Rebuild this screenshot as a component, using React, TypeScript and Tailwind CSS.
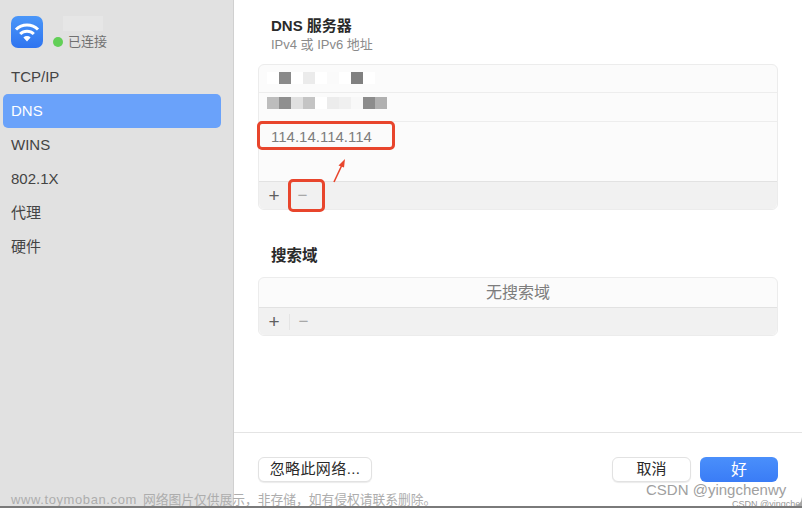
const font = { fontFamily: '"Liberation Sans", "Noto Sans CJK SC", sans-serif' };

const navItems = ["TCP/IP", "DNS", "WINS", "802.1X", "代理", "硬件"];

// mosaic cells covering the hidden DNS addresses
const rowOne = ["bg-white", "bg-[#8a8a8a]", "bg-white", "bg-[#ebebeb]", "bg-white", "bg-[#fafafa]", "bg-white", "bg-[#808080]", "bg-white"];
const rowTwo = ["bg-[#bdbdbd]", "bg-[#8f8f8f]", "bg-[#e0e0e0]", "bg-[#c4c4c4]", "bg-white", "bg-[#ececec]", "bg-[#f0f0f0]", "bg-[#f8f8f8]", "bg-[#8c8c8c]", "bg-[#b0b0b0]"];

const Mosaic = ({ cells }: { cells: string[] }) => (
  <div className="flex h-[12px]">
    {cells.map((c, i) => (
      <span key={i} className={`h-full w-[12px] ${c}`}></span>
    ))}
  </div>
);

const ListFooter = ({ divider }: { divider?: boolean }) => (
  <div className="flex h-[28px] items-center rounded-b-[6px] border-t border-[#e2e2e2] bg-[#f1f1f1] pl-[8px]">
    <span className="w-[14px] text-center text-[19px] font-light leading-none text-[#5f5f5f]">+</span>
    {divider && <span className="ml-[8px] h-[16px] w-px bg-[#e4e4e4]"></span>}
    <span className={`w-[13px] text-center text-[17px] leading-none text-[#a8a8a8] ${divider ? "ml-[7px]" : "ml-[15px]"}`}>−</span>
  </div>
);

const App = () => {
  return (
    <div className="relative flex h-[508px] w-[802px] overflow-hidden bg-white" style={font}>
      <aside className="flex w-[234px] shrink-0 flex-col border-r border-[#d0d0d0] bg-[#e1e1e1] px-[3px] pt-[16px]">
        <div className="flex items-start pl-[8px]">
          <div className="flex h-[32px] w-[32px] items-center justify-center rounded-[7px] bg-gradient-to-b from-[#4a96f8] to-[#2f74f0]">
            <svg width="32" height="32" viewBox="0 0 32 32" fill="none" stroke="white" strokeWidth="3">
              <path d="M5 13.5 A15.5 15.5 0 0 1 27 13.5" />
              <path d="M9.2 18 A9.6 9.6 0 0 1 22.8 18" />
              <path d="M16 25.5 L12.4 21.5 A5.2 5.2 0 0 1 19.6 21.5 Z" fill="white" stroke="none" />
            </svg>
          </div>
          <div className="ml-[10px] flex flex-col">
            <span className="ml-[10px] h-[15px] w-[40px] bg-[#e6e6e6]"></span>
            <div className="mt-[2px] flex items-center gap-[5px]">
              <span className="h-[10px] w-[10px] rounded-full bg-[#62cf57]"></span>
              <span className="text-[13px] leading-[18px] text-[#707070]">已连接</span>
            </div>
          </div>
        </div>
        <nav className="mt-[9px] flex w-[218px] flex-col">
          {navItems.map((item) => (
            <div
              key={item}
              className={`flex h-[34px] items-center rounded-[5px] pl-[8px] text-[15px] ${item === "DNS" ? "bg-[#6aa2fa] text-white" : "text-[#444444]"}`}
            >
              {item}
            </div>
          ))}
        </nav>
      </aside>

      <main className="flex min-w-0 flex-1 flex-col">
        <div className="h-[433px] border-b border-[#e4e4e4] px-[24px] pt-[17px]">
          <h2 className="pl-[13px] text-[15px] font-bold leading-[18px] text-[#2a2a2a]">DNS 服务器</h2>
          <p className="mt-[1px] pl-[13px] text-[13px] leading-[17px] text-[#8a8a8a]">IPv4 或 IPv6 地址</p>

          <div className="relative mt-[11px] w-[520px] rounded-[6px] border border-[#ececec] bg-[#fbfbfb]">
            <div className="flex h-[28px] items-start border-b border-[#ededed] pl-[8px] pt-[7px]">
              <Mosaic cells={rowOne} />
            </div>
            <div className="flex h-[29px] items-start border-b border-[#ededed] pl-[8px] pt-[4px]">
              <Mosaic cells={rowTwo} />
            </div>
            <div className="flex h-[31px] items-center pl-[12px] text-[15px] text-[#7d7d7d]">114.14.114.114</div>
            <div className="h-[28px]"></div>
            <ListFooter />

            {/* red annotations */}
            <div className="absolute left-[-2px] top-[56px] h-[29px] w-[138px] rounded-[5px] border-[3px] border-[#e8452c]"></div>
            <div className="absolute left-[29px] top-[114px] h-[33px] w-[37px] rounded-[5px] border-[3px] border-[#e8452c]"></div>
            <svg className="absolute left-[72px] top-[92px]" width="20" height="26" viewBox="0 0 20 26" fill="none">
              <path d="M3 25 L10.5 9" stroke="#e8452c" strokeWidth="1.6" />
              <path d="M14 2 L7.5 8.5 L13 10.5 Z" fill="#e8452c" />
            </svg>
          </div>

          <h2 className="mt-[37px] pl-[13px] text-[15.5px] font-bold leading-[18px] text-[#2a2a2a]">搜索域</h2>

          <div className="mt-[12px] w-[520px] rounded-[6px] border border-[#ececec] bg-[#fbfbfb]">
            <div className="flex h-[29px] items-center justify-center text-[16px] text-[#7d7d7d]">无搜索域</div>
            <ListFooter divider />
          </div>
        </div>

        <div className="flex items-start px-[24px] pt-[24px]">
          <button className="flex h-[25px] w-[114px] items-center justify-center rounded-[6px] border border-[#e2e2e2] bg-white text-[15px] tracking-[0.4px] text-[#2a2a2a] shadow-[0_1px_1px_rgba(0,0,0,0.08)]">
            忽略此网络...
          </button>
          <button className="ml-auto flex h-[25px] w-[79px] items-center justify-center rounded-[6px] border border-[#e2e2e2] bg-white text-[15px] text-[#2a2a2a] shadow-[0_1px_1px_rgba(0,0,0,0.08)]">
            取消
          </button>
          <button className="ml-[9px] flex h-[25px] w-[78px] items-center justify-center rounded-[6px] bg-gradient-to-b from-[#4a8ffb] to-[#3a7cf6] text-[16px] text-white">
            好
          </button>
        </div>
      </main>

      {/* watermarks over the screenshot */}
      <div className="absolute left-[11px] top-[491px] flex items-center gap-[6px] whitespace-nowrap leading-[17px] text-[#adadad]">
        <span className="text-[13px] tracking-[0.6px]">www.toymoban.com</span>
        <span className="text-[12.75px]">网络图片仅供展示，非存储，如有侵权请联系删除。</span>
      </div>
      <span className="absolute left-[646px] top-[481px] whitespace-nowrap text-[15px] leading-[18px] text-[#a0a0a0]">CSDN @yingchenwy</span>
      <span className="absolute left-[732px] top-[499px] whitespace-nowrap text-[9px] leading-[10px] text-[#999999]">CSDN @yingchenwy</span>
      <div className="absolute bottom-0 left-0 h-[2px] w-full bg-[#7a7a7a]"></div>
      <svg className="absolute bottom-[2px] right-0" width="7" height="9" viewBox="0 0 7 9">
        <path d="M7 0 V9 H0 Q6 8 7 0 Z" fill="#a6a6a6" />
      </svg>
    </div>
  );
};

export default App;
